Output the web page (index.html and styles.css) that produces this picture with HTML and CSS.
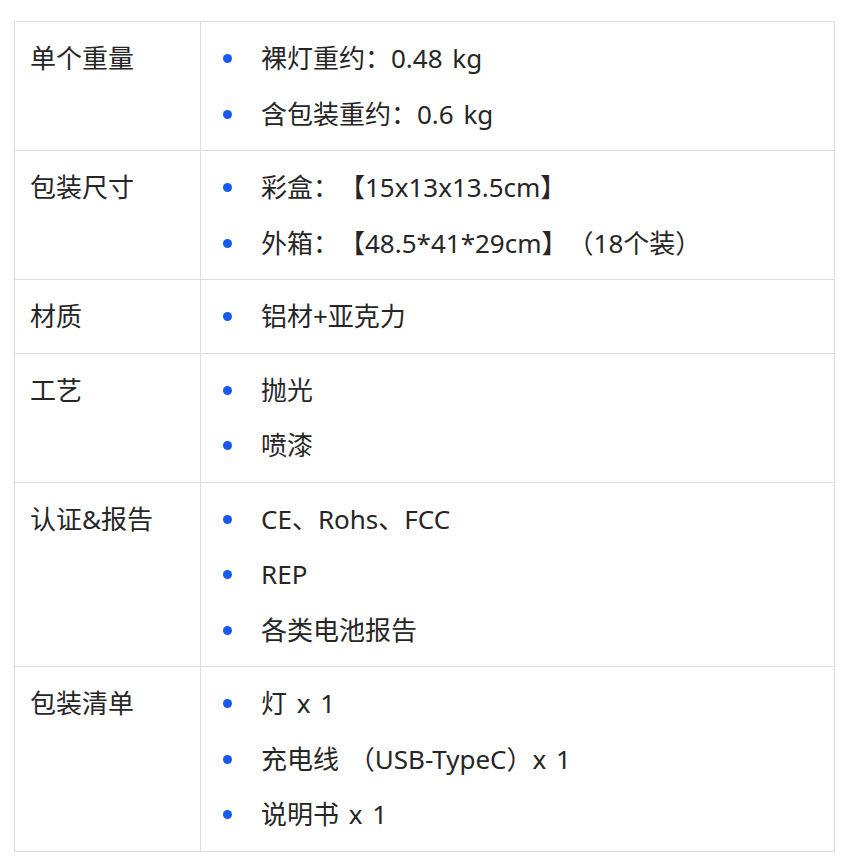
FILE: index.html
```html
<!DOCTYPE html>
<html lang="zh">
<head>
<meta charset="utf-8">
<link rel="stylesheet" href="styles.css">
</head>
<body>
<table class="spec">
  <tr>
    <td class="label">单个重量</td>
    <td class="value"><ul class="list"><li>裸灯重约：0.48 kg</li><li>含包装重约：0.6 kg</li></ul></td>
  </tr>
  <tr>
    <td class="label">包装尺寸</td>
    <td class="value"><ul class="list"><li>彩盒：【15x13x13.5cm】</li><li>外箱：【48.5*41*29cm】（18个装）</li></ul></td>
  </tr>
  <tr>
    <td class="label">材质</td>
    <td class="value"><ul class="list"><li>铝材+亚克力</li></ul></td>
  </tr>
  <tr>
    <td class="label">工艺</td>
    <td class="value"><ul class="list"><li>抛光</li><li>喷漆</li></ul></td>
  </tr>
  <tr>
    <td class="label">认证&amp;报告</td>
    <td class="value"><ul class="list"><li>CE、Rohs、FCC</li><li>REP</li><li>各类电池报告</li></ul></td>
  </tr>
  <tr>
    <td class="label">包装清单</td>
    <td class="value"><ul class="list"><li>灯 x 1</li><li>充电线 （USB-TypeC）x 1</li><li>说明书 x 1</li></ul></td>
  </tr>
</table>
</body>
</html>
```
FILE: styles.css
```css
html, body {
  margin: 0;
  padding: 0;
  background: #ffffff;
}
body {
  padding: 21px 15px 0 14px;
  font-family: "Noto Sans", "Noto Sans CJK SC", sans-serif;
  font-size: 26px;
  color: #262626;
  text-spacing-trim: space-all;
  word-spacing: 3px;
}
.spec {
  width: 821px;
  border-collapse: collapse;
}
.spec td {
  border: 1px solid #dcdcdc;
  vertical-align: top;
  padding: 9px 0 8px 0;
}
.spec .label {
  width: 170px;
  padding-left: 15px;
  line-height: 55.5px;
}
.list {
  list-style: none;
  margin: 0;
  padding: 0 0 0 21px;
}
.list li {
  position: relative;
  line-height: 55.5px;
  height: 55.5px;
  padding-left: 39px;
}
.list li::before {
  content: "";
  position: absolute;
  left: 1px;
  top: 23px;
  width: 9px;
  height: 9px;
  border-radius: 50%;
  background: #1659f5;
}
```
